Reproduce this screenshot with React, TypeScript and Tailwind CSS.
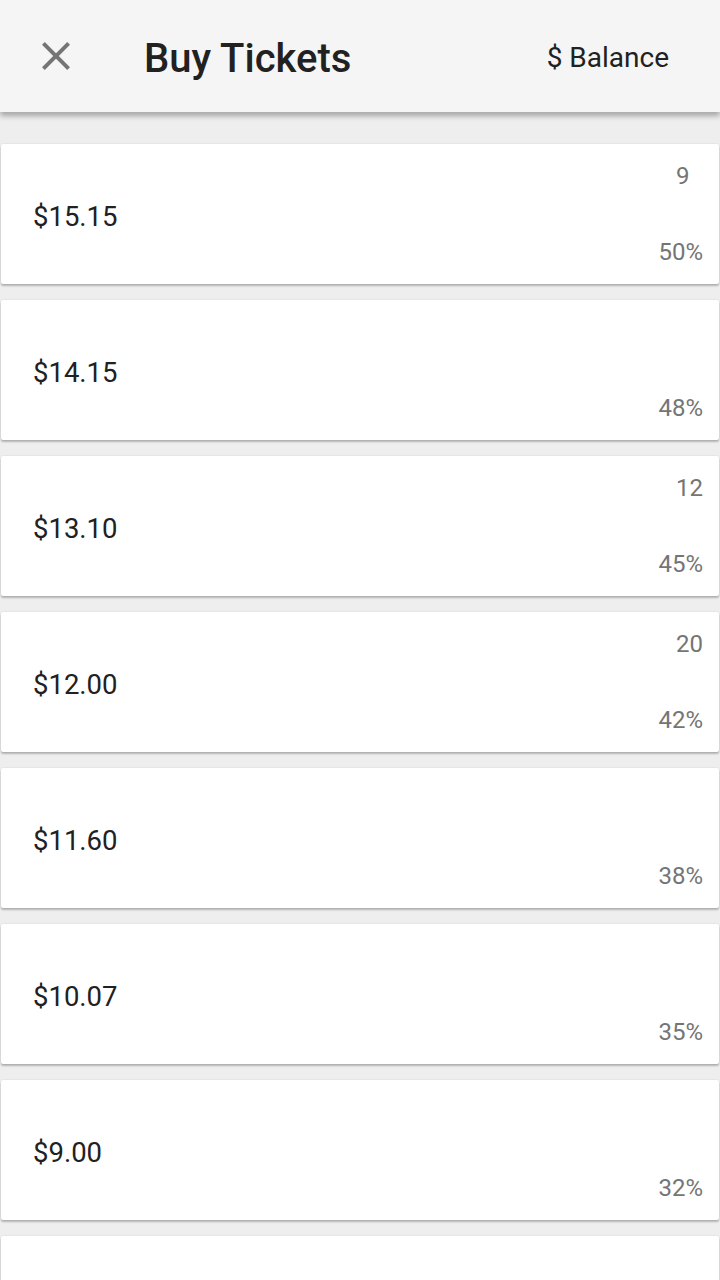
import React from 'react';

type Ticket = { price?: string; count?: string; discount?: string };

// last card only peeks in at the bottom of the screen, nothing of its text is visible
const tickets: Ticket[] = [
  { price: '$15.15', count: '9', discount: '50%' },
  { price: '$14.15', discount: '48%' },
  { price: '$13.10', count: '12', discount: '45%' },
  { price: '$12.00', count: '20', discount: '42%' },
  { price: '$11.60', discount: '38%' },
  { price: '$10.07', discount: '35%' },
  { price: '$9.00', discount: '32%' },
  {},
];

const CloseIcon = () => (
  <svg width="48" height="48" viewBox="0 0 24 24" fill="#757575">
    <path d="M19 6.41L17.59 5 12 10.59 6.41 5 5 6.41 10.59 12 5 17.59 6.41 19 12 13.41 17.59 19 19 17.59 13.41 12z" />
  </svg>
);

const TicketCard = ({ ticket }: { ticket: Ticket }) => (
  <div className="mx-px flex h-[140px] shrink-0 items-stretch justify-between rounded-[2px] bg-white pl-8 pr-4 shadow-[0_2px_2px_rgba(0,0,0,0.24),0_0_2px_rgba(0,0,0,0.12)]">
    <div className="flex items-center pt-[6px] text-[27.5px] text-[#212121]">{ticket.price ?? ''}</div>
    <div className="flex flex-col items-end justify-between py-[18px] text-[24px] leading-[28px] text-[#757575]">
      <div className="w-[27px] text-left">{ticket.count ?? ''}</div>
      <div>{ticket.discount ?? ''}</div>
    </div>
  </div>
);

export default function App() {
  return (
    <div
      className="flex h-screen w-full flex-col overflow-hidden bg-[#eeeeee]"
      style={{ fontFamily: 'Roboto, "Noto Sans", sans-serif' }}
    >
      <header className="relative z-10 flex h-[112px] shrink-0 items-center bg-[#f5f5f5] pl-8 pr-[51px] shadow-[0_4px_5px_rgba(0,0,0,0.24),0_1px_10px_rgba(0,0,0,0.12)]">
        <button className="flex h-12 w-12 items-center justify-center">
          <CloseIcon />
        </button>
        <h1 className="ml-16 mt-[6px] flex-1 text-[40px] font-medium text-[#212121]">Buy Tickets</h1>
        <button className="mt-[3px] text-[28px] text-[#212121]">$ Balance</button>
      </header>

      <div className="flex flex-col gap-4 pt-8">
        {tickets.map((t, i) => (
          <TicketCard key={i} ticket={t} />
        ))}
      </div>
    </div>
  );
}
